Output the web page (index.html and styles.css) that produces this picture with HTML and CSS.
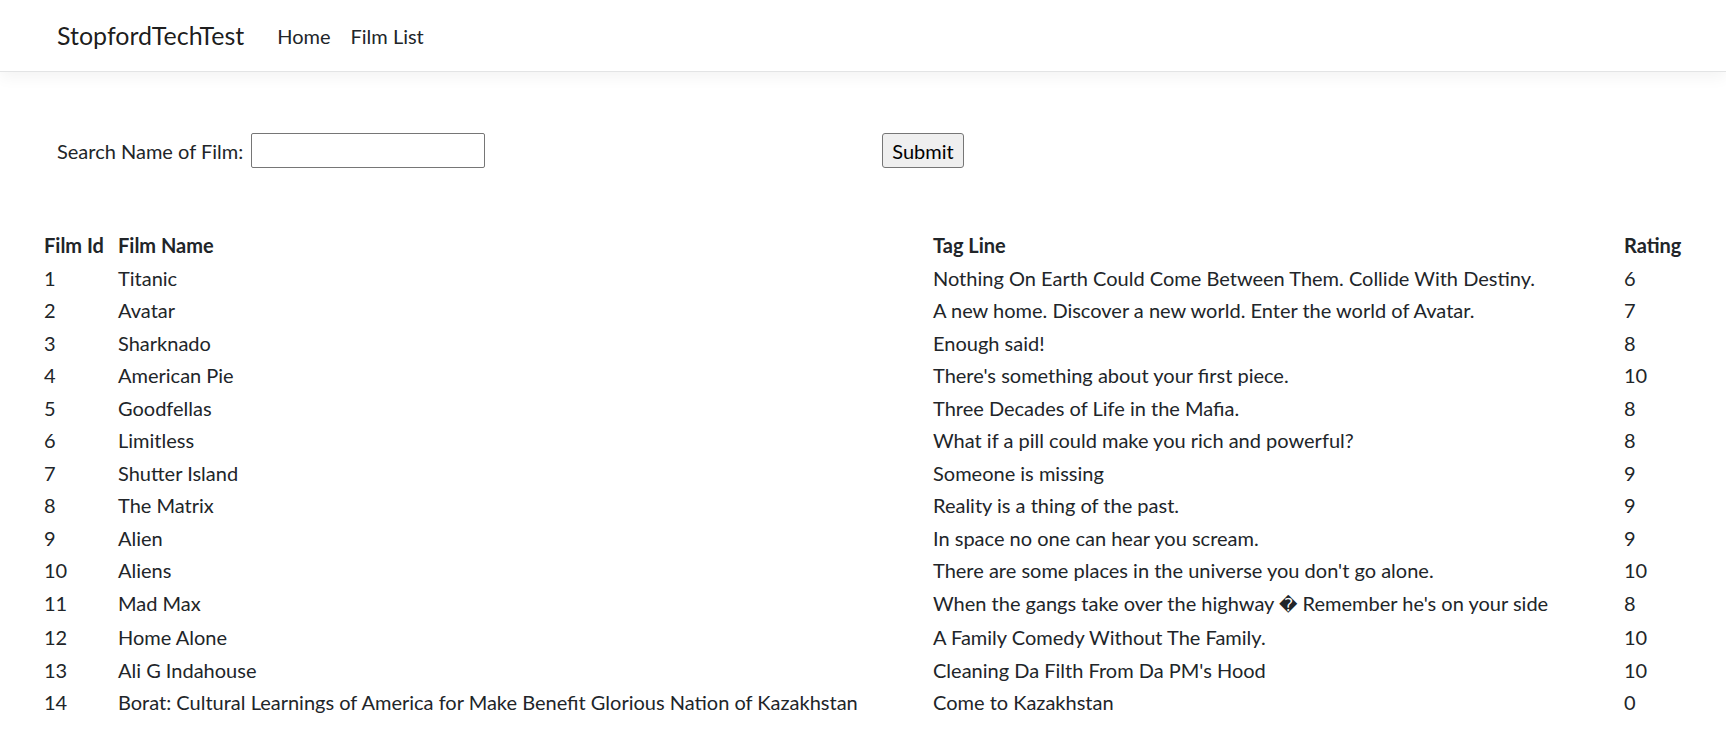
FILE: index.html
```html
<!DOCTYPE html>
<html lang="en">
<head>
<meta charset="utf-8">
<title>Film List - StopfordTechTest</title>
<link rel="stylesheet" href="styles.css">
</head>
<body>
<header class="navbar">
  <a class="brand" href="#">StopfordTechTest</a>
  <nav class="nav">
    <a class="nav-link" href="#">Home</a>
    <a class="nav-link" href="#">Film List</a>
  </nav>
</header>
<main class="main">
  <form class="search-row">
    <div class="search-group">
      <label class="search-label" for="q">Search Name of Film:</label><input id="q" class="search-input" type="text">
    </div>
    <button class="submit-btn" type="button">Submit</button>
  </form>
  <table class="films">
    <colgroup>
      <col class="c-id"><col class="c-name"><col class="c-tag"><col class="c-rating">
    </colgroup>
    <thead>
      <tr><th>Film Id</th><th>Film Name</th><th>Tag Line</th><th>Rating</th></tr>
    </thead>
    <tbody>
      <tr><td>1</td><td>Titanic</td><td>Nothing On Earth Could Come Between Them. Collide With Destiny.</td><td>6</td></tr>
      <tr><td>2</td><td>Avatar</td><td>A new home. Discover a new world. Enter the world of Avatar.</td><td>7</td></tr>
      <tr><td>3</td><td>Sharknado</td><td>Enough said!</td><td>8</td></tr>
      <tr><td>4</td><td>American Pie</td><td>There's something about your first piece.</td><td>10</td></tr>
      <tr><td>5</td><td>Goodfellas</td><td>Three Decades of Life in the Mafia.</td><td>8</td></tr>
      <tr><td>6</td><td>Limitless</td><td>What if a pill could make you rich and powerful?</td><td>8</td></tr>
      <tr><td>7</td><td>Shutter Island</td><td>Someone is missing</td><td>9</td></tr>
      <tr><td>8</td><td>The Matrix</td><td>Reality is a thing of the past.</td><td>9</td></tr>
      <tr><td>9</td><td>Alien</td><td>In space no one can hear you scream.</td><td>9</td></tr>
      <tr><td>10</td><td>Aliens</td><td>There are some places in the universe you don't go alone.</td><td>10</td></tr>
      <tr><td>11</td><td>Mad Max</td><td>When the gangs take over the highway <span class="repl">&#xFFFD;</span> Remember he's on your side</td><td>8</td></tr>
      <tr><td>12</td><td>Home Alone</td><td>A Family Comedy Without The Family.</td><td>10</td></tr>
      <tr><td>13</td><td>Ali G Indahouse</td><td>Cleaning Da Filth From Da PM's Hood</td><td>10</td></tr>
      <tr><td>14</td><td>Borat: Cultural Learnings of America for Make Benefit Glorious Nation of Kazakhstan</td><td>Come to Kazakhstan</td><td>0</td></tr>
    </tbody>
  </table>
</main>
</body>
</html>
```
FILE: styles.css
```css
* { box-sizing: border-box; }
html, body { margin: 0; padding: 0; background: #fff; }
body {
  font-family: "Segoe UI", Lato, "Liberation Sans", sans-serif;
  font-size: 20px;
  line-height: 30px;
  color: #212529;
}
a { text-decoration: none; }

.navbar {
  display: flex;
  align-items: center;
  height: 72px;
  padding: 0 0 0 57px;
  border-bottom: 1px solid #e3e4e5;
  box-shadow: 0 5px 15px rgba(0, 0, 0, 0.05);
  background: #fff;
}
.brand {
  font-size: 25px;
  line-height: 37.5px;
  color: rgba(0, 0, 0, 0.9);
  margin-right: 23px;
}
.nav { display: flex; }
.nav-link {
  color: #212529;
  padding: 10px 10px;
  font-size: 20px;
  line-height: 30px;
}

.main { padding-top: 61px; }

.search-row {
  display: flex;
  align-items: center;
  padding-left: 57px;
  margin: 0;
}
.search-group {
  width: 825px;
  display: flex;
  align-items: center;
}
.search-label { font-size: 20px; }
.search-input {
  width: 234px;
  height: 35px;
  margin-left: 8px;
  border: 1px solid #767676;
  border-radius: 2px;
  font: inherit;
  padding: 1px 3px;
}
.submit-btn {
  height: 35px;
  width: 82px;
  font: inherit;
  line-height: 30px;
  padding: 0;
  background: #efefef;
  color: #000;
  border: 1px solid #767676;
  border-radius: 3px;
}

.films {
  margin: 61px 0 0 43px;
  border-collapse: collapse;
  table-layout: fixed;
  width: 1643px;
}
.c-id { width: 74px; }
.c-name { width: 815px; }
.c-tag { width: 691px; }
.c-rating { width: 63px; }
.films th, .films td {
  padding: 1.25px 1px;
  text-align: left;
  vertical-align: top;
  white-space: nowrap;
  line-height: 30px;
}
.films th { font-weight: 700; }
.repl { font-family: "DejaVu Sans", sans-serif; font-size: 18px; }
```
